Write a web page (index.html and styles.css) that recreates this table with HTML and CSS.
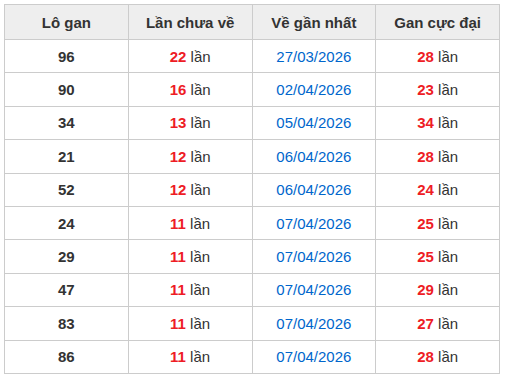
FILE: index.html
```html
<!DOCTYPE html>
<html lang="vi">
<head>
<meta charset="utf-8">
<link rel="stylesheet" href="styles.css">
</head>
<body>
<table class="gan">
  <thead>
    <tr><th>Lô gan</th><th>Lần chưa về</th><th>Về gần nhất</th><th>Gan cực đại</th></tr>
  </thead>
  <tbody>
    <tr><td class="num">96</td><td><b class="red">22</b> lần</td><td class="date">27/03/2026</td><td><b class="red">28</b> lần</td></tr>
    <tr><td class="num">90</td><td><b class="red">16</b> lần</td><td class="date">02/04/2026</td><td><b class="red">23</b> lần</td></tr>
    <tr><td class="num">34</td><td><b class="red">13</b> lần</td><td class="date">05/04/2026</td><td><b class="red">34</b> lần</td></tr>
    <tr><td class="num">21</td><td><b class="red">12</b> lần</td><td class="date">06/04/2026</td><td><b class="red">28</b> lần</td></tr>
    <tr><td class="num">52</td><td><b class="red">12</b> lần</td><td class="date">06/04/2026</td><td><b class="red">24</b> lần</td></tr>
    <tr><td class="num">24</td><td><b class="red">11</b> lần</td><td class="date">07/04/2026</td><td><b class="red">25</b> lần</td></tr>
    <tr><td class="num">29</td><td><b class="red">11</b> lần</td><td class="date">07/04/2026</td><td><b class="red">25</b> lần</td></tr>
    <tr><td class="num">47</td><td><b class="red">11</b> lần</td><td class="date">07/04/2026</td><td><b class="red">29</b> lần</td></tr>
    <tr><td class="num">83</td><td><b class="red">11</b> lần</td><td class="date">07/04/2026</td><td><b class="red">27</b> lần</td></tr>
    <tr><td class="num">86</td><td><b class="red">11</b> lần</td><td class="date">07/04/2026</td><td><b class="red">28</b> lần</td></tr>
  </tbody>
</table>
</body>
</html>
```
FILE: styles.css
```css
html, body {
  margin: 0;
  padding: 0;
  background: #ffffff;
}
body {
  padding: 4px;
  font-family: "Liberation Sans", Arial, sans-serif;
  font-size: 15px;
  color: #333333;
}
.gan {
  width: 496px;
  border-collapse: collapse;
  table-layout: fixed;
}
.gan th, .gan td {
  border: 1px solid #cccccc;
  text-align: center;
  vertical-align: middle;
  padding: 0;
}
.gan thead tr {
  height: 35px;
}
.gan th {
  background: #eeeeee;
  font-weight: bold;
  color: #333333;
}
.gan tbody tr {
  height: 33.4px;
}
.num {
  font-weight: bold;
}
.red {
  color: #ee1c25;
  font-weight: bold;
}
.date {
  color: #0066cc;
}
```
